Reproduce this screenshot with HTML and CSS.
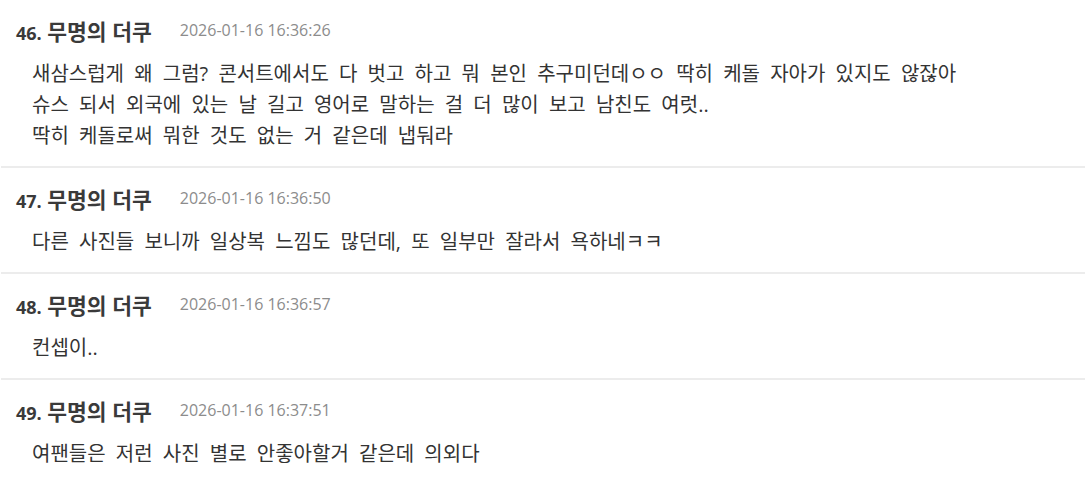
FILE: index.html
```html
<!DOCTYPE html>
<html>
<head>
  <title>댓글</title>
  <link rel="stylesheet" href="styles.css">
</head>
<body>
  <div class="comment-list">

    <div class="comment">
      <div class="comment-head">
        <span class="comment-author"><span class="comment-no">46.</span> 무명의 더쿠</span>
        <span class="comment-date">2026-01-16 16:36:26</span>
      </div>
      <div class="comment-body">
        새삼스럽게 왜 그럼? 콘서트에서도 다 벗고 하고 뭐 본인 추구미던데ㅇㅇ 딱히 케돌 자아가 있지도 않잖아<br>
        슈스 되서 외국에 있는 날 길고 영어로 말하는 걸 더 많이 보고 남친도 여럿..<br>
        딱히 케돌로써 뭐한 것도 없는 거 같은데 냅둬라
      </div>
    </div>

    <div class="comment">
      <div class="comment-head">
        <span class="comment-author"><span class="comment-no">47.</span> 무명의 더쿠</span>
        <span class="comment-date">2026-01-16 16:36:50</span>
      </div>
      <div class="comment-body">다른 사진들 보니까 일상복 느낌도 많던데, 또 일부만 잘라서 욕하네ㅋㅋ</div>
    </div>

    <div class="comment">
      <div class="comment-head">
        <span class="comment-author"><span class="comment-no">48.</span> 무명의 더쿠</span>
        <span class="comment-date">2026-01-16 16:36:57</span>
      </div>
      <div class="comment-body">컨셉이..</div>
    </div>

    <div class="comment">
      <div class="comment-head">
        <span class="comment-author"><span class="comment-no">49.</span> 무명의 더쿠</span>
        <span class="comment-date">2026-01-16 16:37:51</span>
      </div>
      <div class="comment-body">여팬들은 저런 사진 별로 안좋아할거 같은데 의외다</div>
    </div>

  </div>
</body>
</html>
```

FILE: styles.css
```css
body {
  margin: 0;
  background: #fff;
  font-family: "Open Sans", "Noto Sans CJK KR", sans-serif;
  color: #333;
}
.comment-list {
  margin-left: 1px;
}
.comment {
  padding: 18px 0 15px 15px;
  border-bottom: 2px solid #ececec;
}
.comment-head {
  display: flex;
  align-items: center;
  height: 24px;
  margin-bottom: 16px;
}
.comment-author {
  font-size: 21.5px;
  font-weight: bold;
  color: #3a3a3a;
}
.comment-no {
  font-size: 18px;
}
.comment-date {
  margin-left: 28px;
  font-size: 16px;
  color: #8c8c8c;
}
.comment-body {
  padding-left: 16px;
  font-size: 20px;
  line-height: 31px;
  word-spacing: 5px;
  color: #333;
}
```
